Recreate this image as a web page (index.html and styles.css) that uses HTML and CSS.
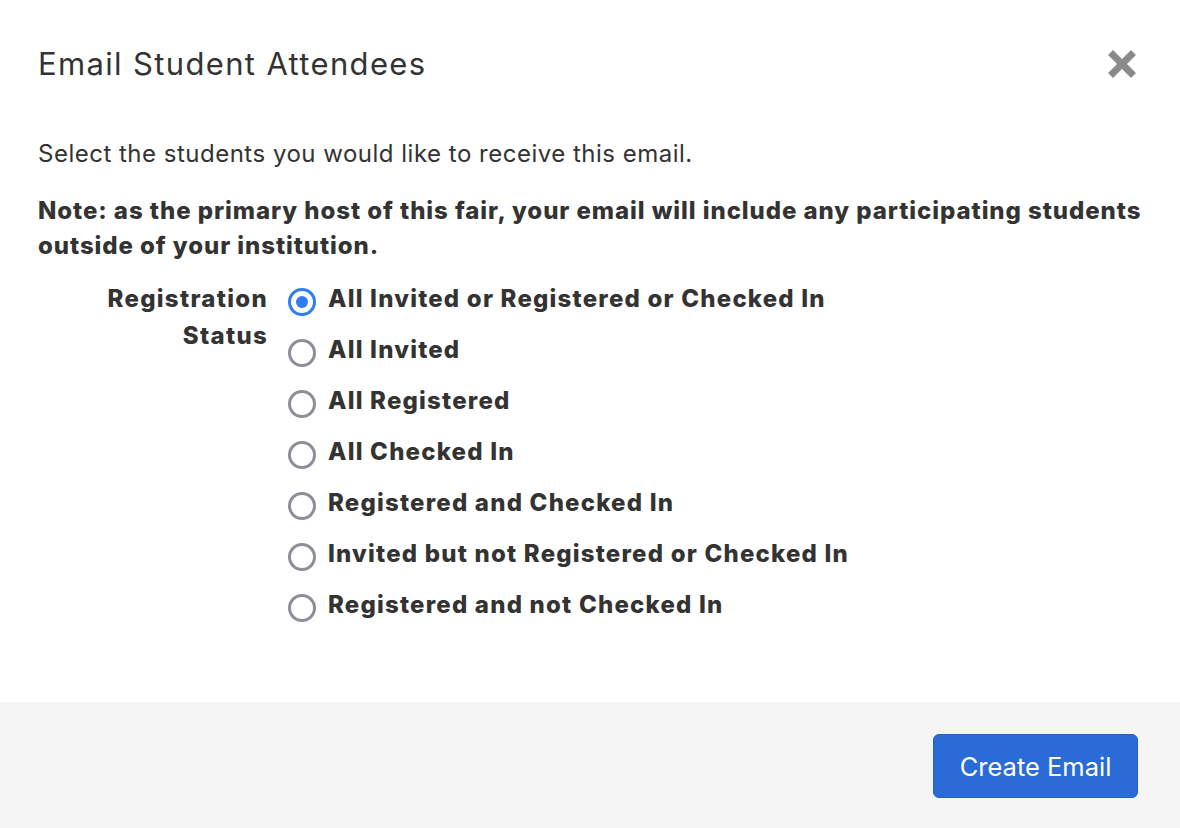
FILE: index.html
```html
<!DOCTYPE html>
<html lang="en">
<head>
<meta charset="utf-8">
<title>Email Student Attendees</title>
<link rel="stylesheet" href="styles.css">
</head>
<body>
<div class="modal">
  <div class="modal-header">
    <h1 class="title">Email Student Attendees</h1>
    <button class="close" aria-label="Close">
      <svg viewBox="0 0 28 28" width="28" height="28"><path d="M5 5 L23 23 M23 5 L5 23" stroke="#8a8a8a" stroke-width="7" stroke-linecap="square"/></svg>
    </button>
  </div>
  <div class="modal-body">
    <p class="intro">Select the students you would like to receive this email.</p>
    <p class="note">Note: as the primary host of this fair, your email will include any participating students outside of your institution.</p>
    <div class="field">
      <div class="field-label">Registration Status</div>
      <div class="options">
        <label class="option"><span class="radio checked"></span><span>All Invited or Registered or Checked In</span></label>
        <label class="option"><span class="radio"></span><span>All Invited</span></label>
        <label class="option"><span class="radio"></span><span>All Registered</span></label>
        <label class="option"><span class="radio"></span><span>All Checked In</span></label>
        <label class="option"><span class="radio"></span><span>Registered and Checked In</span></label>
        <label class="option"><span class="radio"></span><span>Invited but not Registered or Checked In</span></label>
        <label class="option"><span class="radio"></span><span>Registered and not Checked In</span></label>
      </div>
    </div>
  </div>
  <div class="modal-footer">
    <button class="primary">Create Email</button>
  </div>
</div>
</body>
</html>
```
FILE: styles.css
```css
* { box-sizing: border-box; }
html, body { margin: 0; padding: 0; }
body {
  font-family: Inter, "Noto Sans", sans-serif;
  color: #333333;
  background: #ffffff;
  width: 1180px;
  height: 828px;
  overflow: hidden;
}
.modal {
  display: flex;
  flex-direction: column;
  height: 828px;
}
.modal-header {
  display: flex;
  justify-content: space-between;
  align-items: flex-start;
  padding: 44px 44px 0 38px;
  height: 110px;
}
.title {
  margin: 0;
  font-size: 31px;
  font-weight: 400;
  line-height: 40px;
  letter-spacing: 1.35px;
  color: #333;
}
.close {
  border: 0;
  background: none;
  padding: 0;
  margin-top: 6px;
  width: 28px;
  height: 28px;
  cursor: pointer;
}
.close svg { display: block; }
.modal-body {
  flex: 1;
  padding: 26px 38px 0 38px;
}
.intro {
  margin: 0;
  font-size: 24px;
  line-height: 36px;
  letter-spacing: 0.5px;
}
.note {
  margin: 21px 0 0 0;
  font-size: 24px;
  font-weight: 800;
  line-height: 35px;
  letter-spacing: 0.93px;
}
.field {
  display: grid;
  grid-template-columns: 170px 1fr;
  column-gap: 20px;
  margin-top: 17px;
  padding-left: 60px;
}
.field-label {
  text-align: right;
  font-size: 24px;
  font-weight: 800;
  line-height: 37px;
  letter-spacing: 1.3px;
}
.options {
  display: flex;
  flex-direction: column;
  gap: 14px;
}
.option {
  display: flex;
  align-items: center;
  gap: 12px;
  font-size: 24px;
  font-weight: 800;
  line-height: 37px;
  height: 37px;
  letter-spacing: 1.2px;
}
.radio {
  width: 28px;
  height: 28px;
  border-radius: 50%;
  border: 3px solid #8e8e98;
  background: #fff;
  flex: none;
  margin-top: 6px;
  display: flex;
  align-items: center;
  justify-content: center;
}
.radio.checked {
  border-color: #2f7df6;
}
.radio.checked::after {
  content: "";
  width: 12px;
  height: 12px;
  border-radius: 50%;
  background: #2f7df6;
}
.modal-footer {
  height: 126px;
  background: #f5f5f5;
  display: flex;
  justify-content: flex-end;
  align-items: flex-start;
  padding: 32px 42px 0 0;
}
.primary {
  width: 205px;
  height: 64px;
  border: 1px solid #2560c0;
  border-radius: 6px;
  background: #2b6bd6;
  color: #ffffff;
  font-family: Inter, "Noto Sans", sans-serif;
  font-size: 25.5px;
  font-weight: 400;
  cursor: pointer;
}
```
